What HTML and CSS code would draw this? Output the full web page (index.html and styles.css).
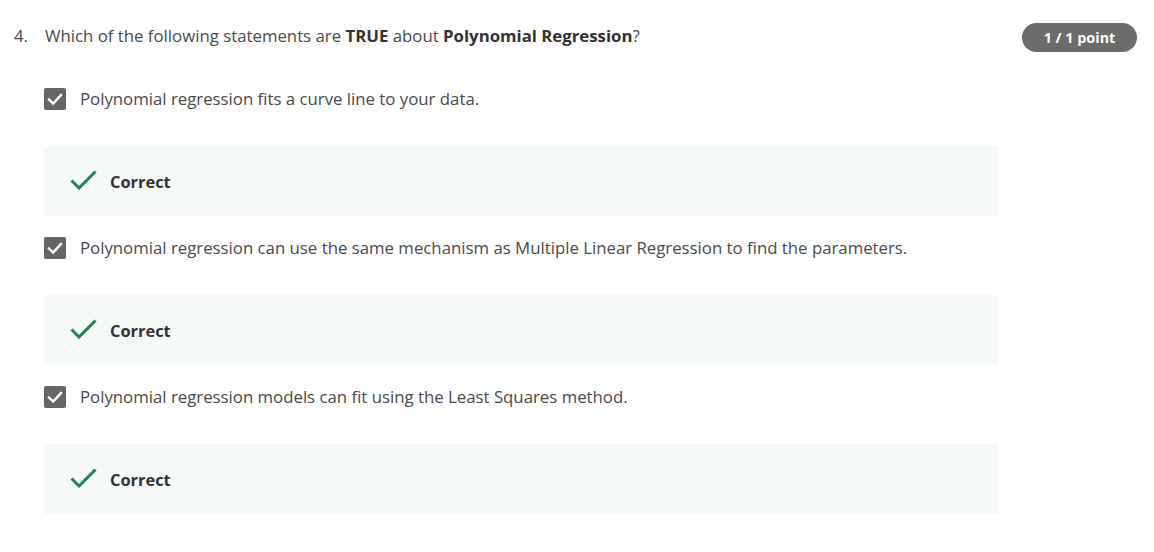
FILE: index.html
```html
<!DOCTYPE html>
<html lang="en">
<head>
<meta charset="utf-8">
<title>Quiz question</title>
<link rel="stylesheet" href="styles.css">
</head>
<body>
<div class="page">
  <div class="header">
    <div class="question">
      <span class="num">4.</span>
      <span class="qtext">Which of the following statements are <strong>TRUE</strong> about <strong>Polynomial Regression</strong>?</span>
    </div>
    <div class="badge">1 / 1 point</div>
  </div>
  <div class="options">
    <div class="option">
      <span class="checkbox"><svg width="18" height="18" viewBox="0 0 18 18"><path d="M3 9.5 L7.2 13.5 L15 5" fill="none" stroke="#fff" stroke-width="2.4" stroke-linecap="square"/></svg></span>
      <span class="label">Polynomial regression fits a curve line to your data.</span>
    </div>
    <div class="feedback">
      <svg class="ok" width="27" height="20" viewBox="0 0 27 20"><path d="M1.5 10.5 L9 18 L25.5 1.5" fill="none" stroke="#1f8354" stroke-width="3"/></svg>
      <span class="correct">Correct</span>
    </div>
    <div class="option">
      <span class="checkbox"><svg width="18" height="18" viewBox="0 0 18 18"><path d="M3 9.5 L7.2 13.5 L15 5" fill="none" stroke="#fff" stroke-width="2.4" stroke-linecap="square"/></svg></span>
      <span class="label">Polynomial regression can use the same mechanism as Multiple Linear Regression to find the parameters.</span>
    </div>
    <div class="feedback">
      <svg class="ok" width="27" height="20" viewBox="0 0 27 20"><path d="M1.5 10.5 L9 18 L25.5 1.5" fill="none" stroke="#1f8354" stroke-width="3"/></svg>
      <span class="correct">Correct</span>
    </div>
    <div class="option">
      <span class="checkbox"><svg width="18" height="18" viewBox="0 0 18 18"><path d="M3 9.5 L7.2 13.5 L15 5" fill="none" stroke="#fff" stroke-width="2.4" stroke-linecap="square"/></svg></span>
      <span class="label">Polynomial regression models can fit using the Least Squares method.</span>
    </div>
    <div class="feedback">
      <svg class="ok" width="27" height="20" viewBox="0 0 27 20"><path d="M1.5 10.5 L9 18 L25.5 1.5" fill="none" stroke="#1f8354" stroke-width="3"/></svg>
      <span class="correct">Correct</span>
    </div>
  </div>
</div>
</body>
</html>
```
FILE: styles.css
```css
html, body {
  margin: 0;
  padding: 0;
  background: #fff;
}
body {
  font-family: "Open Sans", "Liberation Sans", sans-serif;
  color: #4a4a4a;
  font-size: 16.8px;
}
.page {
  padding: 23px 17px 0 14px;
}
.header {
  display: flex;
  justify-content: space-between;
  align-items: center;
  height: 29px;
}
.question {
  display: flex;
  align-items: center;
  line-height: 24px;
  margin-top: -3px;
}
.num {
  width: 31px;
}
.qtext strong {
  font-weight: 700;
  color: #333;
}
.badge {
  width: 115px;
  height: 29px;
  border-radius: 15px;
  background: #6b6b6b;
  color: #fff;
  font-weight: 700;
  font-size: 14.4px;
  display: flex;
  align-items: center;
  justify-content: center;
}
.options {
  margin: 35px 0 0 30px;
  width: 954px;
  display: flex;
  flex-direction: column;
}
.option {
  display: flex;
  align-items: center;
  height: 24px;
  gap: 14px;
  line-height: 24px;
}
.checkbox {
  width: 22px;
  height: 22px;
  border-radius: 2px;
  background: #666;
  display: flex;
  align-items: center;
  justify-content: center;
}
.checkbox svg {
  display: block;
}
.feedback {
  margin: 35px 0 20px;
  height: 70px;
  background: #f5f9f8;
  display: flex;
  align-items: center;
  padding-left: 26px;
  gap: 13px;
}
.ok {
  display: block;
  margin-top: -2px;
}
.correct {
  font-weight: 700;
  font-size: 16.4px;
  color: #333;
}
```
